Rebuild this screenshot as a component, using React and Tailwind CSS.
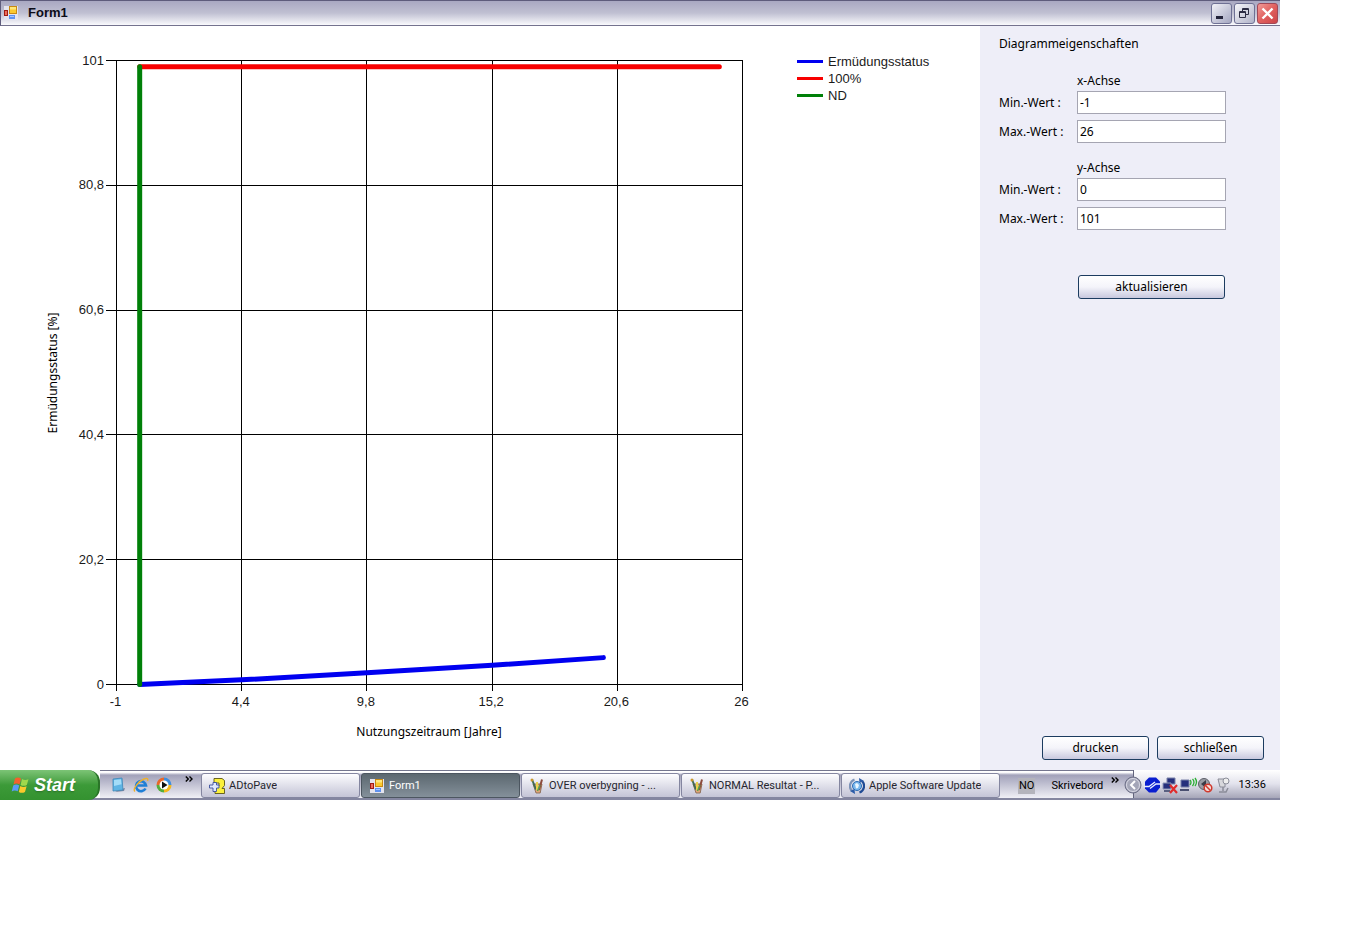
import { useState } from 'react'

const PLOT = { left: 116, right: 742, top: 34, bottom: 658 }

const series = [
  {
    name: 'Ermüdungsstatus',
    color: '#0000f0',
    points: [[0, 0], [4.4, 0.75], [9.8, 1.9], [15.2, 3.1], [20, 4.35]],
  },
  { name: '100%', color: '#f80000', points: [[0, 100], [25, 100]] },
  { name: 'ND', color: '#008008', points: [[0, 0], [0, 100]] },
]

const ticks = (min, max) =>
  [0, 1, 2, 3, 4, 5].map((i) => Number((min + ((max - min) * i) / 5).toFixed(1)))

const label = (value) => String(value).replace('.', ',')

const FormIcon = () => (
  <svg viewBox="0 0 16 16" className="w-4 h-4 shrink-0">
    <rect x="1" y="1" width="14" height="14" fill="#e4e4ee" />
    <rect x="6.500" y="1.500" width="7" height="7" fill="#fbc92e" stroke="#c98a12" />
    <path d="M7 2h6v2.500H7z" fill="#ffe77a" />
    <rect x="1.500" y="5.500" width="3" height="5" fill="#ec6c58" stroke="#a01c14" />
    <rect x="6" y="10" width="6" height="4" fill="#5f92f0" />
    <path d="M7 11h4v1H7z" fill="#a8c8ff" />
  </svg>
)

const PythonIcon = () => (
  <svg viewBox="0 0 16 16" className="w-4 h-4 shrink-0">
    <path
      d="M5 .5h8l2.500 2v5L13 10.500h2.500v5H6v-4L10 8V5H5z"
      fill="#fbf03c"
      stroke="#5b5614"
      strokeWidth="0.9"
    />
    <path
      d="M4 4.500h3.500V7H10v3H7.500v3.500H4V10H.5V7H4z"
      fill="#dfe8ff"
      stroke="#3a4f9c"
      strokeWidth="0.9"
    />
  </svg>
)

const PaintIcon = () => (
  <svg viewBox="0 0 16 16" className="w-4 h-4 shrink-0">
    <path d="M4 6h9l-1.800 9H7z" fill="#e0a878" stroke="#80604a" strokeWidth="0.8" />
    <path d="M3 1.500l4 10" stroke="#3e6a52" strokeWidth="2" />
    <path d="M8 4v8" stroke="#e8d24a" strokeWidth="2" />
    <path d="M13 1.500L10 12" stroke="#8c4a3c" strokeWidth="2" />
    <path d="M8.500 13l2.500-6" stroke="#55a04c" strokeWidth="1.500" />
    <circle cx="3" cy="2" r="1.500" fill="#c89628" />
  </svg>
)

const UpdateIcon = () => (
  <svg viewBox="0 0 16 16" className="w-4 h-4 shrink-0" fill="none">
    <circle cx="8" cy="8" r="4.500" fill="#7ab8ee" stroke="#2f6db4" />
    <path d="M6 6l2-1 2 2-1 3-2 .5z" fill="#eaf6ff" />
    <path d="M5.500 1.500A7 7 0 0 0 3 13" stroke="#7c93b8" strokeWidth="2.200" />
    <path d="M10.500 14.500A7 7 0 0 0 13 3" stroke="#1f4a94" strokeWidth="2.200" />
    <path d="M1 13l4.500-2 .5 5zM15 3l-4.500 2L10 0z" fill="#2c5ca8" />
  </svg>
)

const WindowsLogo = () => (
  <svg viewBox="0 0 20 20" className="w-5 h-5 shrink-0">
    <path d="M4 3.500c2-1.300 4-1.200 6 .1L8.500 9.500c-2-1.300-4-1.300-6 0z" fill="#f4602c" />
    <path d="M11 4c2 1.200 4 1.300 6.500.2L15.800 10c-2.300 1.200-4.300 1.100-6.200-.1z" fill="#a0d84c" />
    <path d="M2.200 10.500c2-1.300 4-1.200 6 0L6.700 16.300c-2-1.200-4-1.200-6 .1z" fill="#5a9bf4" />
    <path d="M9.300 11c2 1.200 4 1.300 6.300.2L14 17c-2.300 1.200-4.300 1.100-6.200-.1z" fill="#fbc92c" />
  </svg>
)

const DesktopIcon = () => (
  <svg viewBox="0 0 16 16" className="w-4 h-4">
    <path d="M11 12l4-1-1 3-9 1z" fill="#7a84a0" />
    <path d="M3 2l9-1 1 12-10 1z" fill="#5fb4e4" stroke="#3c86b8" strokeWidth="0.8" />
    <path d="M4 3l7-.8.500 5L4 9z" fill="#a3dcf8" />
  </svg>
)

const ExplorerIcon = () => (
  <svg viewBox="0 0 16 16" className="w-4 h-4" fill="none">
    <path d="M12.500 11.500A5 5 0 1 1 13 8.500H4.500" stroke="#1f7fd6" strokeWidth="2.600" />
    <path d="M2 14.500C-1 12 6 4 11 2c3-1.200 4.500-.5 3.500 2" stroke="#efb22c" strokeWidth="1.400" />
  </svg>
)

const MediaIcon = () => (
  <svg viewBox="0 0 16 16" className="w-4 h-4">
    <path d="M8 8V.5A7.500 7.500 0 0 1 15.500 8z" fill="#3f8fe0" />
    <path d="M8 8h7.500A7.500 7.500 0 0 1 8 15.500z" fill="#f4b81e" />
    <path d="M8 8v7.500A7.500 7.500 0 0 1 .5 8z" fill="#57ad3c" />
    <path d="M8 8H.5A7.500 7.500 0 0 1 8 .5z" fill="#e8682a" />
    <circle cx="8" cy="8" r="4.500" fill="#fff" />
    <path d="M6 4.500v7L11.500 8z" fill="#111" />
  </svg>
)

const Chevrons = () => (
  <svg viewBox="0 0 8 6" className="w-2 h-1.5" fill="none" stroke="#000" strokeWidth="1.400">
    <path d="M.8.5L3.300 3 .8 5.500M4.500.5L7 3 4.500 5.500" />
  </svg>
)

const tasks = [
  { title: 'ADtoPave', icon: PythonIcon },
  { title: 'Form1', icon: FormIcon, active: true },
  { title: 'OVER overbygning - ...', icon: PaintIcon },
  { title: 'NORMAL Resultat - P...', icon: PaintIcon },
  { title: 'Apple Software Update', icon: UpdateIcon },
]

const TitleBar = () => (
  <header className="h-[26px] shrink-0 flex items-center border-t border-b border-l border-[#5e5c7c] border-b-[#74728e] bg-linear-to-b from-[#a9a8c2] via-[#c0c0d2] to-[#fafafd] px-[2px]">
    <FormIcon />
    <h1 className="ml-[9px] flex-1 text-[13px] leading-4 font-bold text-[#0c0c18]">Form1</h1>
    <div className="flex gap-[2px]">
      <button
        aria-label="Minimieren"
        className="w-[21px] h-[21px] rounded-[3px] border border-[#6e7094] bg-linear-to-br from-[#f2f2f8] to-[#a4a6c0]"
      >
        <svg viewBox="0 0 19 19" className="w-[19px] h-[19px]">
          <path d="M4 12h7v3H4z" fill="#23233a" />
        </svg>
      </button>
      <button
        aria-label="Wiederherstellen"
        className="w-[21px] h-[21px] rounded-[3px] border border-[#6e7094] bg-linear-to-br from-[#f6f6fa] to-[#b0b2c8]"
      >
        <svg viewBox="0 0 19 19" className="w-[19px] h-[19px]" fill="none" stroke="#2c2c44">
          <path d="M7.500 7V4.500h6v6H11M7.500 5.500h6" />
          <path d="M4.500 7.500h6v6h-6zM4.500 8.500h6" />
        </svg>
      </button>
      <button
        aria-label="Schließen"
        className="w-[21px] h-[21px] rounded-[3px] border border-[#a04858] bg-linear-to-br from-[#f09a98] via-[#e0605f] to-[#cc4448]"
      >
        <svg viewBox="0 0 19 19" className="w-[19px] h-[19px]" stroke="#fff" strokeWidth="2.400">
          <path d="M4.500 4.500l10 10M14.500 4.500l-10 10" />
        </svg>
      </button>
    </div>
  </header>
)

const Chart = ({ axes }) => {
  const { left, right, top, bottom } = PLOT
  const px = (v) => left + 0.5 + ((v - axes.xMin) / (axes.xMax - axes.xMin)) * (right - left)
  const py = (v) => bottom + 0.5 - ((v - axes.yMin) / (axes.yMax - axes.yMin)) * (bottom - top)

  return (
    <svg
      viewBox="0 0 980 744"
      preserveAspectRatio="xMinYMin meet"
      className="w-full h-full text-[13px]"
      fill="#1a1a1a"
    >
      <g stroke="#000" shapeRendering="crispEdges">
        {ticks(axes.xMin, axes.xMax).map((v) => (
          <line key={v} x1={px(v)} x2={px(v)} y1={top} y2={bottom + 7} />
        ))}
        {ticks(axes.yMin, axes.yMax).map((v) => (
          <line key={v} x1={left - 10} x2={right} y1={py(v)} y2={py(v)} />
        ))}
      </g>

      {ticks(axes.xMin, axes.xMax).map((v) => (
        <text key={v} x={px(v) - 1} y={bottom + 22} textAnchor="middle">
          {label(v)}
        </text>
      ))}
      {ticks(axes.yMin, axes.yMax).map((v) => (
        <text key={v} x={left - 12} y={py(v) + 4} textAnchor="end">
          {label(v)}
        </text>
      ))}

      {series.map((s) => (
        <polyline
          key={s.name}
          points={s.points.map(([x, y]) => `${px(x)},${py(y)}`).join(' ')}
          fill="none"
          stroke={s.color}
          strokeWidth="5"
          strokeLinecap="round"
          strokeLinejoin="round"
        />
      ))}

      <g className="font-['Noto_Sans',sans-serif] text-[12px]" fill="#000">
        <text x="429" y="710" textAnchor="middle">
          Nutzungszeitraum [Jahre]
        </text>
        <text transform="translate(57 347) rotate(-90)" textAnchor="middle">
          Ermüdungsstatus [%]
        </text>
      </g>

      {series.map((s, i) => (
        <g key={s.name}>
          <path d={`M797 ${35.5 + i * 17}h26`} stroke={s.color} strokeWidth="3" />
          <text x="828" y={40 + i * 17}>
            {s.name}
          </text>
        </g>
      ))}
    </svg>
  )
}

const Field = ({ id, text, value, onChange }) => (
  <div className="flex items-center">
    <label htmlFor={id} className="w-[78px] shrink-0">
      {text}
    </label>
    <input
      id={id}
      value={value}
      onChange={(e) => onChange(e.target.value)}
      className="w-[149px] h-[23px] px-[2px] bg-white border border-[#a5a5b2] outline-none"
    />
  </div>
)

const XpButton = ({ className, children, ...rest }) => (
  <button
    className={`h-6 rounded-[3px] border border-[#1c3c60] bg-linear-to-b from-white via-[#f4f4fa] to-[#c8c8de] ${className}`}
    {...rest}
  >
    {children}
  </button>
)

const Properties = ({ axes, onUpdate }) => {
  const [form, setForm] = useState(axes)
  const set = (key) => (value) => setForm({ ...form, [key]: value })

  const submit = (e) => {
    e.preventDefault()
    onUpdate({
      xMin: Number(form.xMin),
      xMax: Number(form.xMax),
      yMin: Number(form.yMin),
      yMax: Number(form.yMax),
    })
  }

  return (
    <form
      onSubmit={submit}
      className="w-[300px] shrink-0 flex flex-col bg-[#eeeef8] pl-[19px] pt-2.5 pb-2.5 font-['Noto_Sans',sans-serif] text-[12px] leading-4 text-black"
    >
      <h2>Diagrammeigenschaften</h2>

      <p className="mt-[21px] ml-[78px]">x-Achse</p>
      <div className="mt-[2px] flex flex-col gap-1.5">
        <Field id="x-min" text="Min.-Wert :" value={form.xMin} onChange={set('xMin')} />
        <Field id="x-max" text="Max.-Wert :" value={form.xMax} onChange={set('xMax')} />
      </div>

      <p className="mt-[17px] ml-[78px]">y-Achse</p>
      <div className="mt-[2px] flex flex-col gap-1.5">
        <Field id="y-min" text="Min.-Wert :" value={form.yMin} onChange={set('yMin')} />
        <Field id="y-max" text="Max.-Wert :" value={form.yMax} onChange={set('yMax')} />
      </div>

      <XpButton type="submit" className="mt-[45px] ml-[79px] w-[147px] shrink-0">
        aktualisieren
      </XpButton>

      <div className="mt-auto pr-4 flex justify-end gap-2">
        <XpButton type="button" className="w-[107px]">
          drucken
        </XpButton>
        <XpButton type="button" className="w-[107px]">
          schließen
        </XpButton>
      </div>
    </form>
  )
}

const Tray = () => (
  <div className="w-[147px] shrink-0 flex items-center pt-[2px] pr-3.5 text-black border-l border-[#62647c] bg-linear-to-b from-white via-[#e2e2ec] to-[#a6a6b8]">
    <button
      aria-label="Ausgeblendete Symbole"
      className="relative -ml-2.5 w-[18px] h-[18px] mr-[2px] shrink-0"
    >
      <svg viewBox="0 0 18 18" className="w-[18px] h-[18px]" fill="none">
        <circle cx="9" cy="9" r="8" fill="#a4a6b8" stroke="#6e7088" />
        <circle cx="9" cy="9" r="6.500" stroke="#d8d8e4" />
        <path d="M11 5L7 9l4 4" stroke="#fff" strokeWidth="2" />
      </svg>
    </button>
    <svg viewBox="0 0 92 18" className="w-[92px] h-[18px] shrink-0" fill="none">
      {/* connection */}
      <path d="M5 1.500h7l4 4v6l-4 5H5l-4-4v-7z" fill="#0a1ed0" />
      <path d="M0 10.500h5l6-4.500M6 12.500L12 8h5" stroke="#e8ecff" strokeWidth="1.300" />
      {/* network unplugged */}
      <path d="M23 2h8v6h-8z" fill="#26307c" stroke="#7880a8" />
      <path d="M19 7h8v6h-8z" fill="#26307c" stroke="#9098b8" />
      <path d="M20 15h6" stroke="#5a5f80" strokeWidth="2" />
      <path d="M26 9l7 8M33 9l-7 8" stroke="#e02c2c" strokeWidth="2.200" />
      {/* wireless */}
      <path d="M37 4h8v7h-8z" fill="#26307c" stroke="#7880a8" />
      <path d="M36 14h9" stroke="#4a4f70" strokeWidth="2" />
      <path d="M46 4q2 2 0 5M48.500 3q3 3 0 7M51 2q3 4 0 8" stroke="#2cae34" strokeWidth="1.300" />
      {/* volume */}
      <circle cx="60" cy="8" r="5.500" fill="#9a9ca4" stroke="#5c5e68" />
      <path d="M57 8l5-4v8z" fill="#3a3c48" />
      <circle cx="64" cy="12" r="3.800" fill="#f4dcd8" stroke="#d0382c" strokeWidth="1.500" />
      <path d="M61.500 9.500l5 5" stroke="#d0382c" strokeWidth="1.500" />
      {/* device */}
      <path d="M74 3h7v8h-5z" fill="#d8d8dc" stroke="#8a8c98" />
      <circle cx="82" cy="5" r="3" fill="#eee" stroke="#8a8c98" />
      <path d="M75 16h7l2-4M79 11v4" stroke="#8a8c98" strokeWidth="1.500" />
    </svg>
    <time className="ml-auto">13:36</time>
  </div>
)

const Taskbar = () => (
  <footer className="h-[30px] shrink-0 flex items-stretch font-['Roboto',sans-serif] text-[11px] leading-4 text-[#26262e] border-b-2 border-[#8486a0]">
    <button className="-mb-[2px] w-[100px] shrink-0 flex items-center gap-[3px] pl-[11px] rounded-r-xl border-r-2 border-[#2a7428] bg-linear-to-b from-[#7cc476] via-[#3c9a38] to-[#349230] font-['Liberation_Sans',sans-serif] text-[18px] font-bold italic text-white text-shadow-sm">
      <WindowsLogo />
      Start
    </button>

    <div className="flex-1 min-w-0 flex border-t border-[#74768e] bg-linear-to-b from-white from-5% via-[#a2a2ba] via-15% to-[#f0f0f6]">
      <nav className="w-[100px] shrink-0 flex items-center gap-[7px] pl-[10px]">
        <button aria-label="Desktop anzeigen">
          <DesktopIcon />
        </button>
        <button aria-label="Internet Explorer">
          <ExplorerIcon />
        </button>
        <button aria-label="Media Player">
          <MediaIcon />
        </button>
        <button aria-label="Weitere" className="ml-1.5 mb-3">
          <Chevrons />
        </button>
      </nav>

      <div className="flex-1 min-w-0 flex pt-[2px]">
        {tasks.map((task) => (
          <button
            key={task.title}
            className={`w-[159px] ml-px min-w-0 flex items-center gap-1 pl-[7px] rounded-[3px] border text-left ${
              task.active
                ? 'border-[#4c5660] bg-linear-to-b from-[#5c6870] to-[#84909a] text-white'
                : 'border-[#8486a0] bg-linear-to-b from-[#fdfdff] via-[#e0e0ea] to-[#c4c4d6]'
            }`}
          >
            <task.icon />
            <span className="truncate">{task.title}</span>
          </button>
        ))}
      </div>

      <div className="w-[133px] shrink-0 pt-[2px] pl-[18px] flex items-center text-black">
        <span className="bg-[#b4b4bc] px-px">NO</span>
        <button className="ml-4">Skrivebord</button>
        <button aria-label="Weitere Symbole" className="ml-2 mb-3">
          <Chevrons />
        </button>
      </div>
    </div>

    <Tray />
  </footer>
)

const App = () => {
  const [axes, setAxes] = useState({ xMin: -1, xMax: 26, yMin: 0, yMax: 101 })

  return (
    <div className="h-screen flex flex-col bg-white pr-[65px] pb-[134px] font-['Liberation_Sans',Arial,sans-serif]">
      <TitleBar />
      <main className="flex-1 min-h-0 flex">
        <div className="flex-1 min-w-0">
          <Chart axes={axes} />
        </div>
        <Properties axes={axes} onUpdate={setAxes} />
      </main>
      <Taskbar />
    </div>
  )
}

export default App
